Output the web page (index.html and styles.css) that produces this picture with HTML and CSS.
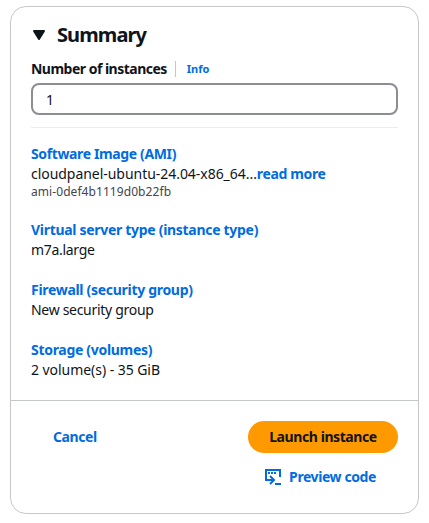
FILE: index.html
```html
<!DOCTYPE html>
<html lang="en">
<head>
<meta charset="utf-8">
<title>Summary</title>
<link rel="stylesheet" href="styles.css">
</head>
<body>
<section class="card">
  <div class="content">
    <header class="heading">
      <svg class="caret" viewBox="0 0 14 12" width="14" height="12"><path d="M2 2h10L7 10z"/></svg>
      <h2>Summary</h2>
    </header>
    <div class="label-row">
      <label for="count">Number of instances</label>
      <a class="info">Info</a>
    </div>
    <input id="count" type="text" value="1">
    <div class="details">
      <div class="item">
        <a class="link ami">Software Image (AMI)</a>
        <div class="value image">cloudpanel-ubuntu-24.04-x86_64...<a class="link ami">read more</a></div>
        <div class="small">ami-0def4b1119d0b22fb</div>
      </div>
      <div class="item">
        <a class="link">Virtual server type (instance type)</a>
        <div class="value">m7a.large</div>
      </div>
      <div class="item">
        <a class="link">Firewall (security group)</a>
        <div class="value">New security group</div>
      </div>
      <div class="item">
        <a class="link">Storage (volumes)</a>
        <div class="value volumes">2 volume(s) - 35 GiB</div>
      </div>
    </div>
  </div>
  <footer class="footer">
    <button class="cancel">Cancel</button>
    <div class="actions">
      <button class="launch">Launch instance</button>
      <button class="preview">
        <svg viewBox="0 0 16 16" width="16" height="16"><path d="M15 8V1H1v10h8M5 7l4 4-4 4M10 15h6"/><path d="M3 4h2M6 4h2M9 4h2"/></svg>
        <span>Preview code</span>
      </button>
    </div>
  </footer>
</section>
</body>
</html>
```
FILE: styles.css
```css
* { box-sizing: border-box; }
body { margin: 0; background: #fff; color: #0f141a; font: 14px/20px "Noto Sans", "Open Sans", sans-serif; }
.card { width: 409px; height: 508px; margin: 6px 0 0 10px; border: 1px solid #c6c6cd; border-radius: 16px; }
.content { height: 394px; padding: 16px 20px 0; border-bottom: 1px solid #c6c6cd; }
.heading { display: flex; align-items: center; height: 24px; gap: 12px; }
.caret { margin-left: 1px; margin-right: -1px; }
.caret path { fill: #0f141a; stroke: #0f141a; stroke-width: 2; stroke-linejoin: round; }
h2 { margin: 0; font-size: 20px; line-height: 24px; font-weight: 700; letter-spacing: -0.9px; }
.label-row { display: flex; align-items: center; height: 20px; margin-top: 12px; font-weight: 700; }
.label-row label { letter-spacing: -0.51px; }
.info { margin-left: 8px; padding-left: 11px; border-left: 1px solid #c6c6cd; font-size: 11px; line-height: 16px; color: #006ce0; position: relative; }
input { display: block; width: 367px; height: 32px; margin-top: 4px; padding: 0 13px; border: 2px solid #8c8c94; border-radius: 8px; font: inherit; color: inherit; }
.details { display: flex; flex-direction: column; gap: 20px; margin-top: 12px; padding-top: 16px; border-top: 1px solid #ebebf0; }
.link { color: #006ce0; font-weight: 700; letter-spacing: -0.3px; }
.ami { letter-spacing: -0.37px; }
.item > .link { display: block; }
.small { font-size: 12px; line-height: 16px; color: #424650; letter-spacing: 0.07px; }
.value { white-space: nowrap; letter-spacing: -0.3px; }
.image { letter-spacing: -0.04px; }
.volumes { letter-spacing: -0.05px; }
.footer { display: flex; justify-content: space-between; align-items: flex-start; padding: 20px 20px 0; }
button { padding: 0; border: 0; background: none; font: inherit; font-weight: 700; letter-spacing: -0.42px; color: #006ce0; }
.cancel { height: 32px; margin-left: 22px; }
.actions { display: flex; flex-direction: column; align-items: center; gap: 8px; width: 150px; }
.launch { width: 150px; height: 32px; border-radius: 20px; background: #f90; color: #0f141a; }
.preview { display: flex; align-items: center; gap: 8px; height: 32px; margin-right: 5px; }
.preview path { fill: none; stroke: currentColor; stroke-width: 2; }
```
